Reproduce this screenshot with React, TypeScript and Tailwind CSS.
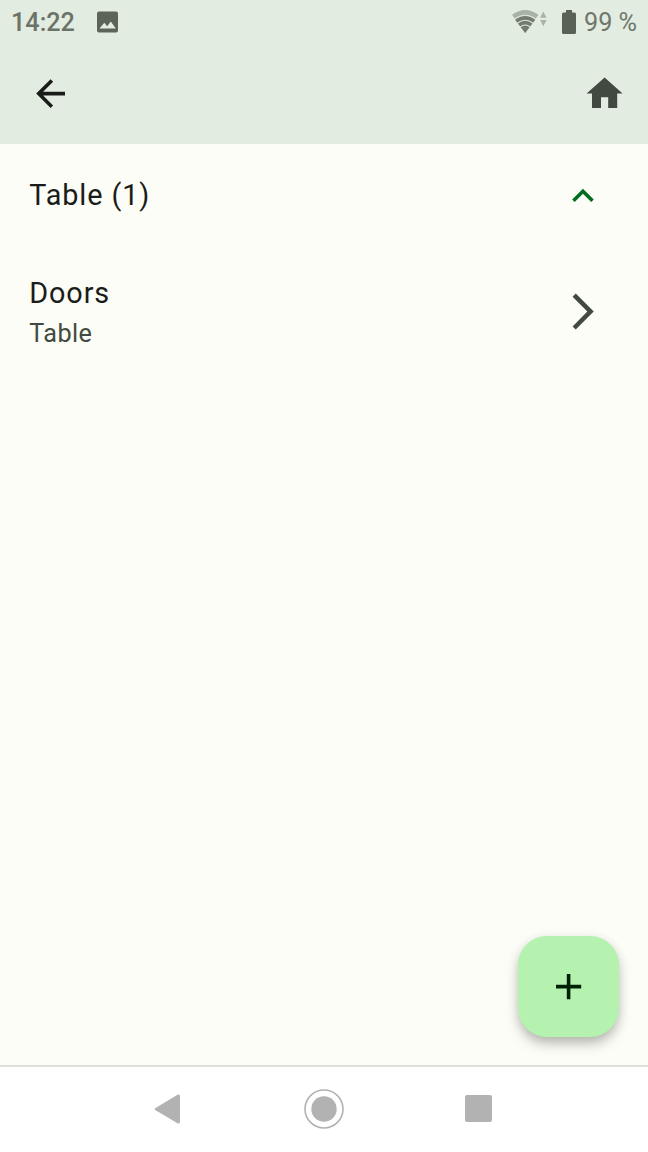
function StatusBar() {
  return (
    <div className="flex h-[43px] items-center text-[25.2px] leading-none">
      <span className="ml-[11px] mt-[2px] w-[65px] font-medium text-[#6b7369]">14:22</span>
      <svg className="ml-[17px] h-[28px] w-[28px]" viewBox="0 0 28 28" fill="#5c645a">
        <path fillRule="evenodd" d="M6 3.500h17q2 0 2 2v17q0 2-2 2H6q-2 0-2-2v-17q0-2 2-2zM6.500 20.500h16.300l-5-7-3.600 4.700-2.900-3.400z" />
      </svg>
      <svg className="ml-auto h-[24px] w-[36px]" viewBox="0 0 36 24">
        <path d="M0 4.800Q13.200 -4.700 26.500 4.800L13.200 23Z" fill="#a9b2a7" />
        <path d="M3.100 9.700Q13.200 2.300 23.200 9.700L13.200 23Z" fill="#737b71" />
        <path d="M2.500 9.100Q13.200 1.300 23.900 9.100M5.300 13.300Q13.200 7.300 21.100 13.300M8 17.100Q13.200 13 18.400 17.100" fill="none" stroke="#dfe9dd" strokeWidth="1.100" />
        <path d="M31.300 1.500l3.200 6.200h-6.400zM31.300 16.200l-3.200-6.200h6.400z" fill="#a9b2a7" />
      </svg>
      <svg className="ml-[14px] h-[24px] w-[14px]" viewBox="0 0 14 24" fill="#596157">
        <path d="M4 0h6v2.500h2.500q1.500 0 1.500 1.500v18.500q0 1.500-1.500 1.500h-11q-1.500 0-1.500-1.500V4q0-1.500 1.500-1.500H4z" />
      </svg>
      <span className="ml-[8px] mr-[12px] mt-[2px] w-[52px] whitespace-nowrap text-[#6f776d]">99 %</span>
    </div>
  );
}

function Header() {
  return (
    <div className="flex h-[101px] items-start justify-between pl-[28.800px] pr-[22px] pt-[29px]">
      <button aria-label="Back">
        <svg className="size-[43.2px]" viewBox="0 0 24 24" fill="#1a1c19">
          <path d="M20 11H7.830l5.590-5.590L12 4l-8 8 8 8 1.410-1.410L7.830 13H20z" />
        </svg>
      </button>
      <button aria-label="Home">
        <svg className="size-[43.2px]" viewBox="0 0 24 24" fill="#424940">
          <path d="M10 20v-6h4v6h5v-8h3L12 3 2 12h3v8z" />
        </svg>
      </button>
    </div>
  );
}

export default function App() {
  return (
    <div className="flex h-[1152px] w-[648px] flex-col overflow-hidden bg-[#fcfdf6] font-[Roboto,sans-serif] text-[#1a1c19]">
      <header className="h-[144px] shrink-0 bg-[#e2ece0]">
        <StatusBar />
        <Header />
      </header>
      <main className="flex flex-1 flex-col pl-[29.200px] pr-[28.800px]">
        <div className="flex h-[103px] items-center justify-between pr-[14.800px]">
          <h1 className="text-[28.800px] leading-[43px] tracking-[0.900px]">Table (1)</h1>
          <svg className="mt-[1px] size-[43.200px]" viewBox="-0.2 -0.2 24 24" fill="#006e1c">
            <path d="M12 8l-6 6 1.410 1.410L12 10.830l4.590 4.580L18 14z" />
          </svg>
        </div>
        <div className="flex h-[129px] items-center justify-between pr-[14.800px]">
          <div className="pt-[1px]">
            <h2 className="text-[28.800px] leading-[43px] tracking-[0.900px]">Doors</h2>
            <p className="text-[25.200px] leading-[38px] tracking-[0.450px] text-[#424940]">Table</p>
          </div>
          <svg className="size-[43.200px]" viewBox="-0.2 0 24 24" fill="#424940">
            <path d="M6.230 20.230 8 22l10-10L8 2 6.230 3.770 14.460 12z" />
          </svg>
        </div>
        <button
          aria-label="Add"
          className="mb-[28.400px] mt-auto flex size-[100.800px] items-center justify-center self-end rounded-[28.800px] bg-[#b5f2b0] shadow-[0_8px_14px_-2px_rgba(0,0,0,0.26),0_2px_12px_rgba(0,0,0,0.09)]"
        >
          <svg className="size-[43.200px]" viewBox="0 0 24 24" fill="#002204">
            <path d="M19 13h-6v6h-2v-6H5v-2h6V5h2v6h6z" />
          </svg>
        </button>
      </main>
      <nav className="flex h-[87px] shrink-0 items-center border-t-2 border-[#dededb] bg-white pb-[1.500px]">
        <svg className="ml-[154px] h-[30px] w-[27px]" viewBox="0 0 27 30" fill="#b2b2b2">
          <path d="M1.200 14.200 23.500.7Q26 0 26 2.500v25Q26 30 23.500 29.200L1.200 16Q0 15 1.200 14.200z" />
        </svg>
        <svg className="ml-[123px] size-[40px]" viewBox="0 0 40 40">
          <circle cx="20" cy="20" r="19" fill="none" stroke="#b2b2b2" strokeWidth="1.600" />
          <circle cx="20" cy="20" r="12.700" fill="#b2b2b2" />
        </svg>
        <div className="ml-[121px] size-[27px] rounded-[2px] bg-[#b2b2b2]" />
      </nav>
    </div>
  );
}
